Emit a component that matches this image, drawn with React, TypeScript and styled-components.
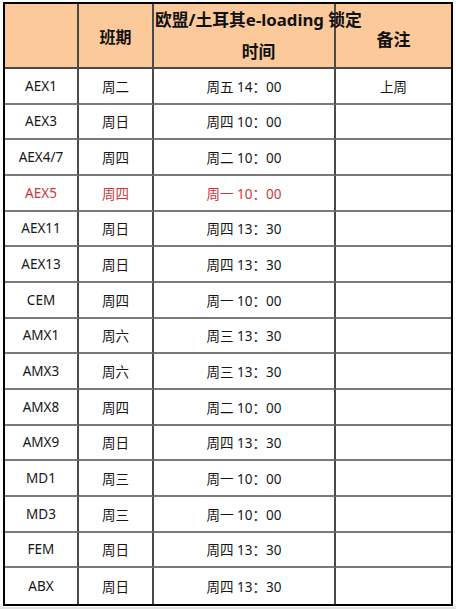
import * as React from "react";
import styled, { createGlobalStyle } from "styled-components";

const GlobalStyle = createGlobalStyle`
  html, body {
    margin: 0;
    padding: 0;
    background: #e2e2e2;
  }
  body {
    font-family: "Noto Sans", "Noto Sans CJK SC", sans-serif;
    color: #1c1c1c;
  }
`;

const Page = styled.div`
  background: #ffffff;
  width: 456px;
  height: 607px;
  padding: 2px 3px 1px 3px;
  box-sizing: border-box;
`;

const Sheet = styled.div`
  display: grid;
  width: 450px;
  height: 604px;
  box-sizing: border-box;
  border: 2px solid #000;
  grid-template-columns: 74px 75px 182px 115px;
  grid-template-rows: 65px repeat(15, 1fr);
`;

const Row = styled.div`
  display: contents;

  &:last-child > div {
    border-bottom: none;
  }
`;

const Cell = styled.div<{ $alert?: boolean }>`
  display: flex;
  align-items: center;
  justify-content: center;
  box-sizing: border-box;
  border-right: 2px solid #4a4a4a;
  border-bottom: 2px solid #7a7a7a;
  font-size: 13.5px;
  color: ${(p) => (p.$alert ? "#c9383a" : "#161616")};
  white-space: nowrap;

  &:last-child {
    border-right: none;
  }
`;

const HeadCell = styled(Cell)<{ $size?: number; $drop?: number; $start?: boolean }>`
  background: #fcc99b;
  border-bottom-color: #4a4a4a;
  font-weight: 700;
  color: #111;
  font-size: ${(p) => p.$size ?? 16}px;
  padding-top: ${(p) => p.$drop ?? 0}px;
  justify-content: ${(p) => (p.$start ? "flex-start" : "center")};
  overflow: visible;
`;

const Wrapped = styled.div`
  position: relative;
  z-index: 1;
  width: max-content;
  margin-left: 1px;
  text-align: center;
  line-height: 32px;
`;

const Line = styled.div`
  white-space: nowrap;
`;

type Entry = { ship: string; day: string; lock: string; note?: string; alert?: boolean };

const rows: Entry[] = [
  { ship: "AEX1", day: "周二", lock: "周五 14：00", note: "上周" },
  { ship: "AEX3", day: "周日", lock: "周四 10：00" },
  { ship: "AEX4/7", day: "周四", lock: "周二 10：00" },
  { ship: "AEX5", day: "周四", lock: "周一 10：00", alert: true },
  { ship: "AEX11", day: "周日", lock: "周四 13：30" },
  { ship: "AEX13", day: "周日", lock: "周四 13：30" },
  { ship: "CEM", day: "周四", lock: "周一 10：00" },
  { ship: "AMX1", day: "周六", lock: "周三 13：30" },
  { ship: "AMX3", day: "周六", lock: "周三 13：30" },
  { ship: "AMX8", day: "周四", lock: "周二 10：00" },
  { ship: "AMX9", day: "周日", lock: "周四 13：30" },
  { ship: "MD1", day: "周三", lock: "周一 10：00" },
  { ship: "MD3", day: "周三", lock: "周一 10：00" },
  { ship: "FEM", day: "周日", lock: "周四 13：30" },
  { ship: "ABX", day: "周日", lock: "周四 13：30" },
];

export default function App() {
  return (
    <>
      <GlobalStyle />
      <Page>
        <Sheet>
          <Row>
            <HeadCell />
            <HeadCell>班期</HeadCell>
            <HeadCell $start $size={16.8}>
              <Wrapped>
                <Line>欧盟/土耳其e-loading 锁定</Line>
                <Line>时间</Line>
              </Wrapped>
            </HeadCell>
            <HeadCell $size={17} $drop={6}>
              备注
            </HeadCell>
          </Row>
          {rows.map((r) => (
            <Row key={r.ship}>
              <Cell $alert={r.alert}>{r.ship}</Cell>
              <Cell $alert={r.alert}>{r.day}</Cell>
              <Cell $alert={r.alert}>{r.lock}</Cell>
              <Cell $alert={r.alert}>{r.note}</Cell>
            </Row>
          ))}
        </Sheet>
      </Page>
    </>
  );
}
